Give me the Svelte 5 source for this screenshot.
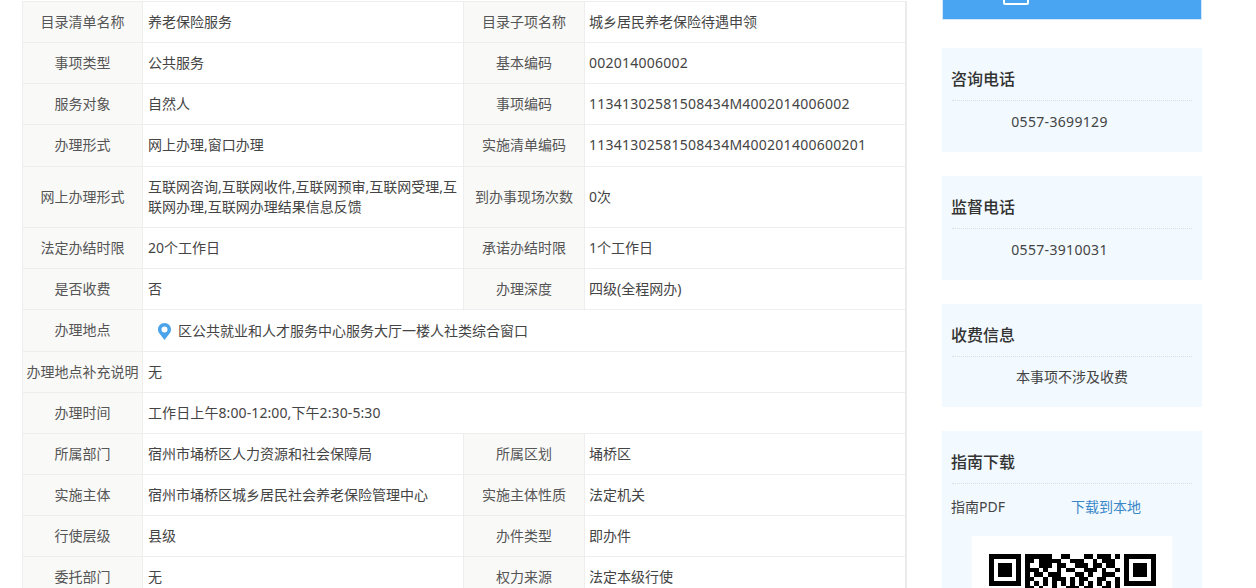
<script lang="ts">
  interface Row {
    label: string;
    value: string;
    label2?: string;
    value2?: string;
    tall?: boolean;
    pin?: boolean;
  }

  const rows: Row[] = [
    { label: '目录清单名称', value: '养老保险服务', label2: '目录子项名称', value2: '城乡居民养老保险待遇申领' },
    { label: '事项类型', value: '公共服务', label2: '基本编码', value2: '002014006002' },
    { label: '服务对象', value: '自然人', label2: '事项编码', value2: '11341302581508434M4002014006002' },
    { label: '办理形式', value: '网上办理,窗口办理', label2: '实施清单编码', value2: '11341302581508434M400201400600201', tall: true },
    { label: '网上办理形式', value: '互联网咨询,互联网收件,互联网预审,互联网受理,互联网办理,互联网办理结果信息反馈', label2: '到办事现场次数', value2: '0次' },
    { label: '法定办结时限', value: '20个工作日', label2: '承诺办结时限', value2: '1个工作日' },
    { label: '是否收费', value: '否', label2: '办理深度', value2: '四级(全程网办)' },
    { label: '办理地点', value: '区公共就业和人才服务中心服务大厅一楼人社类综合窗口', pin: true, tall: true },
    { label: '办理地点补充说明', value: '无' },
    { label: '办理时间', value: '工作日上午8:00-12:00,下午2:30-5:30' },
    { label: '所属部门', value: '宿州市埇桥区人力资源和社会保障局', label2: '所属区划', value2: '埇桥区' },
    { label: '实施主体', value: '宿州市埇桥区城乡居民社会养老保险管理中心', label2: '实施主体性质', value2: '法定机关' },
    { label: '行使层级', value: '县级', label2: '办件类型', value2: '即办件' },
    { label: '委托部门', value: '无', label2: '权力来源', value2: '法定本级行使' },
  ];

  const isCode = (text: string) => /^[0-9A-Z]+$/.test(text);

  // visible top of the code, 37 modules across
  const qr = [
    '1111111011111100110001101110101111111',
    '1000001011011111001110010111001000001',
    '1011101010011101100111011011001011101',
    '1011101011101001011001110100101011101',
    '1011101010110111000110100111001011101',
    '1000001011001011101011001100101000001',
    '1111111010101010101010101010101111111',
    '0000000011010010011101100110100000000',
    '1011011100101101110010011011011010110',
  ];
</script>

<div class="page">
  <main class="guide">
    <table>
      <colgroup>
        <col class="c-label" />
        <col class="c-value" />
        <col class="c-label2" />
        <col class="c-value" />
      </colgroup>
      <tbody>
        {#each rows as row (row.label)}
          <tr class:tall={row.tall}>
            <th>{row.label}</th>
            {#if row.label2}
              <td>{row.value}</td>
              <th>{row.label2}</th>
              <td class="second" class:code={isCode(row.value2 ?? '')}>{row.value2}</td>
            {:else}
              <td colspan="3" class:hours={row.label === '办理时间'}>
                {#if row.pin}
                  <span class="place">
                    <svg width="13" height="17" viewBox="0 0 13 17" aria-hidden="true">
                      <path
                        fill="#4ba3ea"
                        fill-rule="evenodd"
                        d="M6.5 0C2.9 0 0 2.9 0 6.4c0 1.5.5 2.8 1.3 3.9L6.5 17l5.2-6.7c.8-1.1 1.3-2.4 1.3-3.9C13 2.9 10.1 0 6.5 0zm0 3.5a3 3 0 1 1 0 6 3 3 0 0 1 0-6z"
                      />
                    </svg>
                    {row.value}
                  </span>
                {:else}
                  {row.value}
                {/if}
              </td>
            {/if}
          </tr>
        {/each}
      </tbody>
    </table>
  </main>

  <aside class="side">
    <div class="apply">
      <span class="apply-icon"></span>
    </div>

    <section class="card">
      <h3>咨询电话</h3>
      <p class="phone">0557-3699129</p>
    </section>

    <section class="card">
      <h3>监督电话</h3>
      <p class="phone">0557-3910031</p>
    </section>

    <section class="card">
      <h3>收费信息</h3>
      <p class="fee">本事项不涉及收费</p>
    </section>

    <section class="card">
      <h3>指南下载</h3>
      <div class="pdf">
        <span class="pdf-name">指南PDF</span>
        <a href="#top">下载到本地</a>
      </div>
      <div class="qr-box">
        <svg class="qr" width="167" height="41" viewBox="0 0 37 9" shape-rendering="crispEdges" aria-hidden="true">
          {#each qr as line, y}
            {#each line.split('') as bit, x}
              {#if bit === '1'}
                <rect {x} {y} width="1" height="1" />
              {/if}
            {/each}
          {/each}
        </svg>
      </div>
    </section>
  </aside>
</div>

<style>
  :global(body) {
    margin: 0;
    background: #fff;
  }

  .page {
    display: flex;
    gap: 36px;
    height: 588px;
    overflow: hidden;
    padding-left: 22px;
    font-family: 'Noto Sans', 'Noto Sans CJK SC', sans-serif;
    font-size: 14px;
    color: #444;
  }

  .guide {
    width: 884px;
    flex-shrink: 0;
    padding-top: 1px;
  }

  table {
    width: 883px;
    table-layout: fixed;
    border-collapse: collapse;
    border-right: 2px solid #ebebeb;
  }

  .c-label {
    width: 120px;
  }

  .c-value {
    width: 321px;
  }

  .c-label2 {
    width: 121px;
  }

  th,
  td {
    border: 1px solid #eee;
    padding: 10px 5px;
    line-height: 20px;
    font-size: 14px;
    font-weight: 400;
  }

  th {
    background: #f9f9f8;
    color: #555;
    text-align: center;
    padding: 10px 2px;
  }

  td {
    text-align: left;
    color: #444;
  }

  td.second {
    padding-left: 4px;
  }

  td.code {
    letter-spacing: 0.25px;
  }

  td.hours {
    letter-spacing: 0.1px;
  }

  tr.tall td,
  tr.tall th {
    padding-bottom: 11px;
  }

  .place {
    display: flex;
    align-items: center;
    gap: 7px;
    margin: 1px 0 -1px;
    padding-left: 10px;
  }

  .side {
    width: 260px;
    flex-shrink: 0;
  }

  .apply {
    display: flex;
    justify-content: center;
    align-items: flex-end;
    height: 20px;
    box-sizing: border-box;
    padding-bottom: 14px;
    overflow: hidden;
    background: #49a5f2;
    border: 1px solid #d4e8f9;
    border-top: 0;
    margin-bottom: 28px;
  }

  .apply-icon {
    display: block;
    flex-shrink: 0;
    width: 26px;
    height: 20px;
    box-sizing: border-box;
    margin-right: 113px;
    border: 2px solid #fff;
    border-radius: 2px;
  }

  .card {
    background: #f2f9ff;
    padding: 0 10px;
    margin-bottom: 24px;
  }

  h3 {
    margin: 0;
    height: 53px;
    box-sizing: border-box;
    padding-top: 19px;
    line-height: 24px;
    font-size: 16px;
    font-weight: 500;
    text-indent: -1px;
    color: #333;
    border-bottom: 1px dotted #ddd;
  }

  .phone {
    margin: 0;
    padding: 10px 25px 19px 0;
    line-height: 22px;
    text-align: center;
    letter-spacing: 0.33px;
    color: #444;
  }

  .fee {
    margin: 0;
    padding: 10px 0 20px;
    line-height: 20px;
    text-align: center;
    color: #444;
  }

  .pdf {
    display: flex;
    align-items: center;
    height: 44px;
    margin-bottom: 8px;
  }

  .pdf-name {
    width: 120px;
    margin-left: -1px;
  }

  .pdf a {
    color: #3a87c8;
    text-decoration: none;
  }

  .qr-box {
    width: 200px;
    height: 80px;
    margin: 0 auto;
    background: #fff;
    padding-top: 18px;
    box-sizing: border-box;
  }

  .qr {
    display: block;
    margin-left: 17px;
  }
</style>
